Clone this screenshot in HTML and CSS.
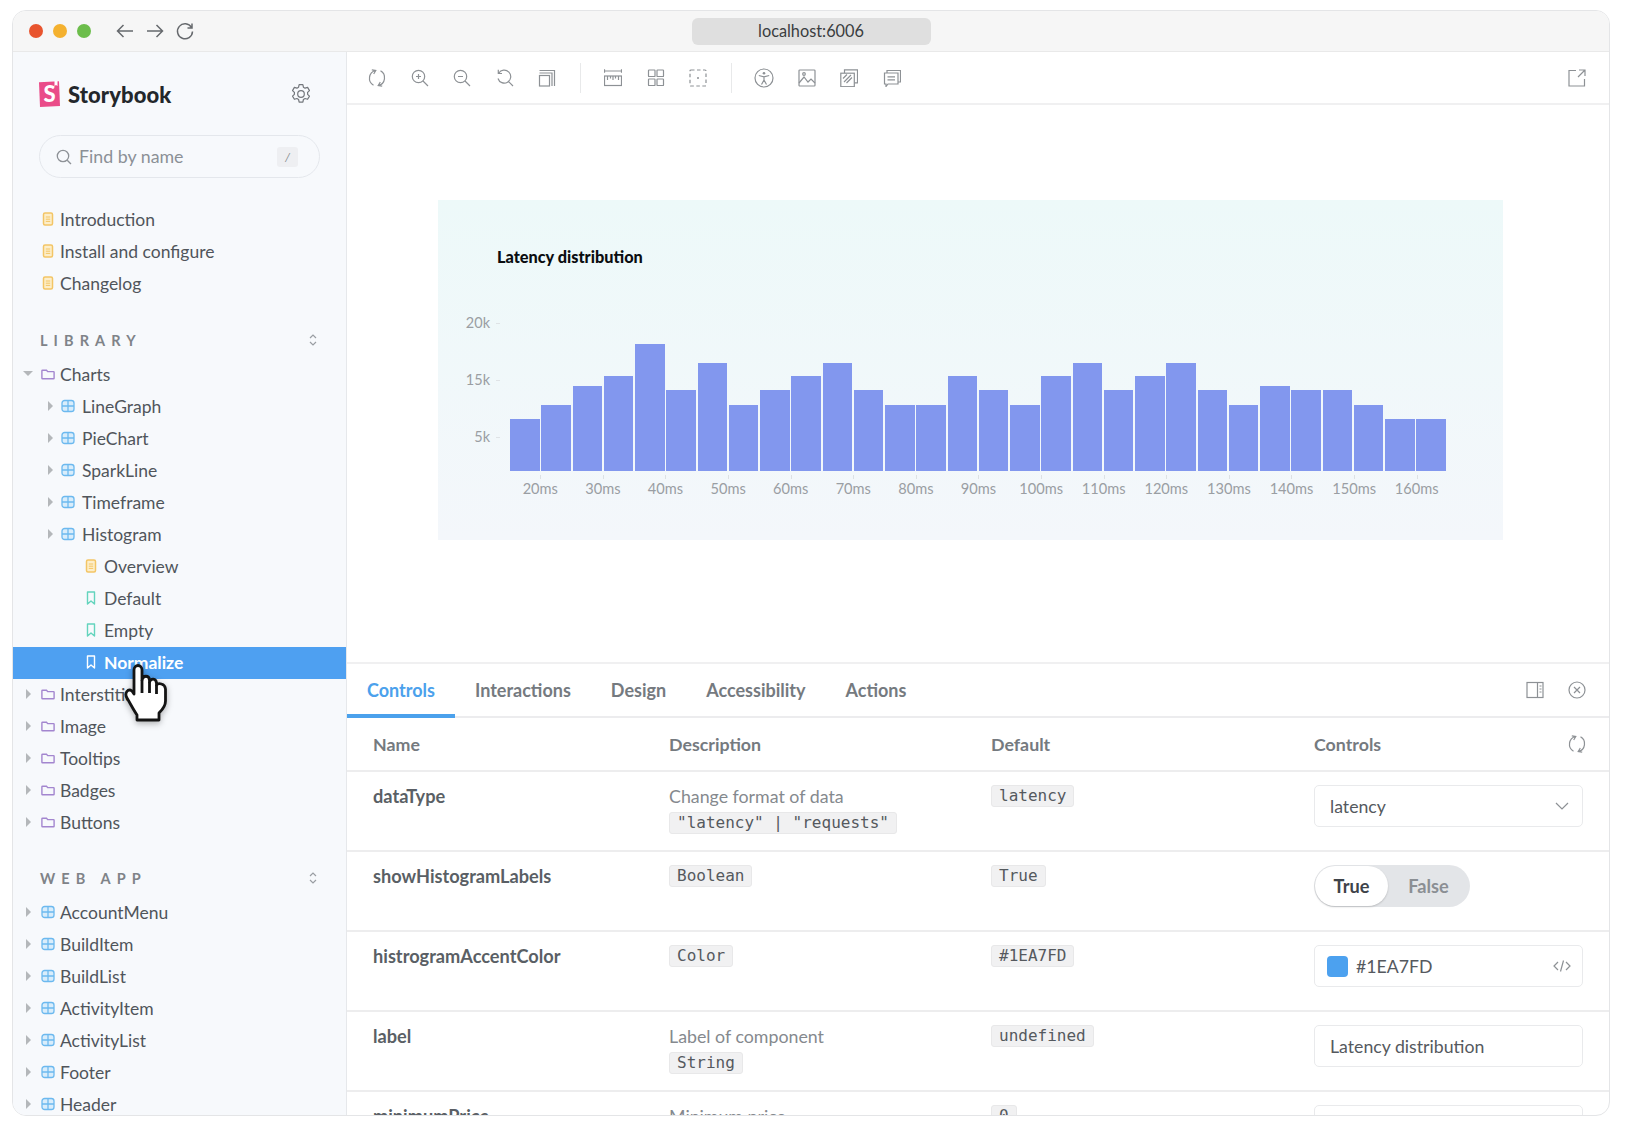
FILE: index.html
```html
<!DOCTYPE html>
<html lang="en">
<head>
<meta charset="utf-8">
<title>Storybook</title>
<link rel="stylesheet" href="styles.css">
</head>
<body>
<svg class="defs" width="0" height="0">
  <defs>
    <symbol id="doc" viewBox="0 0 12 14"><rect x="1.500" y="1" width="9" height="12" rx="1.500" fill="#fdeec9" stroke="#f3c565" stroke-width="1.500"/><path d="M3.800 5h4.400M3.800 7.200h4.400M3.800 9.400h4.400" stroke="#f3c565" stroke-width="1"/></symbol>
    <symbol id="folder" viewBox="0 0 14 14"><path d="M1.500 3.200h4l1.200 1.400h5.800a.6.600 0 0 1 .6.600v6a.6.600 0 0 1-.6.600h-11a.6.600 0 0 1-.6-.6V3.800a.6.600 0 0 1 .6-.6z" fill="none" stroke="#a386cf" stroke-width="1.400"/></symbol>
    <symbol id="comp" viewBox="0 0 14 14"><rect x="1" y="1.500" width="12" height="11" rx="2.600" fill="#d9edfb" stroke="#6cb9ef" stroke-width="1.300"/><path d="M7 1.500v11M1 7h12" stroke="#6cb9ef" stroke-width="1.300"/></symbol>
    <symbol id="mark" viewBox="0 0 12 14"><path d="M2.500 1h7v12L6 10l-3.500 3z" fill="none" stroke="#63d4bd" stroke-width="1.400" stroke-linejoin="round"/></symbol>
    <symbol id="markw" viewBox="0 0 12 14"><path d="M2.500 1h7v12L6 10l-3.500 3z" fill="none" stroke="#fff" stroke-width="1.400" stroke-linejoin="round"/></symbol>
    <symbol id="updown" viewBox="0 0 10 14"><path d="M2 5l3-3 3 3M2 9l3 3 3-3" fill="none" stroke="#9a9ea3" stroke-width="1.200"/></symbol>
    <symbol id="sync" viewBox="0 0 18 18"><path d="M5.500 16.200A8 8 0 0 1 7.500 1.500M3.800 .8 7.800 1.500 5.700 5M12.500 1.800A8 8 0 0 1 10.500 16.500M14.200 17.200 10.200 16.500 12.300 13"/></symbol>
  </defs>
</svg>

<div class="window">
  <header class="titlebar">
    <div class="chrome-left">
      <span class="light red"></span><span class="light amber"></span><span class="light green"></span>
      <div class="nav">
        <svg class="ico20" viewBox="0 0 20 20"><path d="M18 10H2.500M8.500 4l-6 6 6 6"/></svg>
        <svg class="ico20" viewBox="0 0 20 20"><path d="M2 10h15.500M11.500 4l6 6-6 6"/></svg>
        <svg class="ico20" viewBox="0 0 20 20"><path d="M16.500 6.500A7.500 7.500 0 1 0 17.500 10.500M17 2.500v4.500h-4.500"/></svg>
      </div>
    </div>
    <div class="url">localhost:6006</div>
    <div></div>
  </header>

  <div class="main">
    <aside class="sidebar">
      <div class="brand">
        <svg class="logo" viewBox="0 0 22 26"><path d="M0 1.200 20 .3 21 25 1 26z" fill="#ea4c89"/><path d="M15.500 0l3 .1v5l-1.500-1.200-1.500 1.100z" fill="#fff"/><text x="10.500" y="21" class="logo-s">S</text></svg>
        <span class="brand-name">Storybook</span>
        <svg class="gear" viewBox="0 0 20 20"><path d="M8.300 1.500h3.400l.5 2.300 1.500.9 2.300-.7 1.700 2.900-1.700 1.600v1.800l1.700 1.600-1.700 2.900-2.300-.7-1.500.9-.5 2.300H8.300l-.5-2.300-1.500-.9-2.300.7-1.700-2.900 1.700-1.600V8.500L2.300 6.900 4 4l2.300.7 1.500-.9z"/><circle cx="10" cy="10" r="3"/></svg>
      </div>
      <div class="search">
        <svg class="search-ico" viewBox="0 0 16 16"><circle cx="7" cy="7" r="5.700"/><path d="M11.200 11.200 15 15"/></svg>
        <span class="search-text">Find by name</span>
        <kbd class="slash">/</kbd>
      </div>

      <div class="group first">
        <div class="row d0"><span class="caret none"></span><svg class="ti"><use href="#doc"/></svg><span>Introduction</span></div>
        <div class="row d0"><span class="caret none"></span><svg class="ti"><use href="#doc"/></svg><span>Install and configure</span></div>
        <div class="row d0"><span class="caret none"></span><svg class="ti"><use href="#doc"/></svg><span>Changelog</span></div>
      </div>

      <div class="section"><span class="section-name">LIBRARY</span><svg class="updown"><use href="#updown"/></svg></div>
      <div class="group">
        <div class="row d0"><span class="caret open"></span><svg class="ti"><use href="#folder"/></svg><span>Charts</span></div>
        <div class="row d1"><span class="caret"></span><svg class="ti"><use href="#comp"/></svg><span>LineGraph</span></div>
        <div class="row d1"><span class="caret"></span><svg class="ti"><use href="#comp"/></svg><span>PieChart</span></div>
        <div class="row d1"><span class="caret"></span><svg class="ti"><use href="#comp"/></svg><span>SparkLine</span></div>
        <div class="row d1"><span class="caret"></span><svg class="ti"><use href="#comp"/></svg><span>Timeframe</span></div>
        <div class="row d1"><span class="caret"></span><svg class="ti"><use href="#comp"/></svg><span>Histogram</span></div>
        <div class="row d2"><svg class="ti"><use href="#doc"/></svg><span>Overview</span></div>
        <div class="row d2"><svg class="ti"><use href="#mark"/></svg><span>Default</span></div>
        <div class="row d2"><svg class="ti"><use href="#mark"/></svg><span>Empty</span></div>
        <div class="row d2 selected"><svg class="ti"><use href="#markw"/></svg><span>Normalize</span></div>
        <div class="row d0"><span class="caret"></span><svg class="ti"><use href="#folder"/></svg><span>Interstitial</span></div>
        <div class="row d0"><span class="caret"></span><svg class="ti"><use href="#folder"/></svg><span>Image</span></div>
        <div class="row d0"><span class="caret"></span><svg class="ti"><use href="#folder"/></svg><span>Tooltips</span></div>
        <div class="row d0"><span class="caret"></span><svg class="ti"><use href="#folder"/></svg><span>Badges</span></div>
        <div class="row d0"><span class="caret"></span><svg class="ti"><use href="#folder"/></svg><span>Buttons</span></div>
      </div>

      <div class="section web"><span class="section-name">WEB APP</span><svg class="updown"><use href="#updown"/></svg></div>
      <div class="group">
        <div class="row d0"><span class="caret"></span><svg class="ti"><use href="#comp"/></svg><span>AccountMenu</span></div>
        <div class="row d0"><span class="caret"></span><svg class="ti"><use href="#comp"/></svg><span>BuildItem</span></div>
        <div class="row d0"><span class="caret"></span><svg class="ti"><use href="#comp"/></svg><span>BuildList</span></div>
        <div class="row d0"><span class="caret"></span><svg class="ti"><use href="#comp"/></svg><span>ActivityItem</span></div>
        <div class="row d0"><span class="caret"></span><svg class="ti"><use href="#comp"/></svg><span>ActivityList</span></div>
        <div class="row d0"><span class="caret"></span><svg class="ti"><use href="#comp"/></svg><span>Footer</span></div>
        <div class="row d0"><span class="caret"></span><svg class="ti"><use href="#comp"/></svg><span>Header</span></div>
      </div>
    </aside>

    <main class="content">
      <div class="toolbar">
        <svg class="tool"><use href="#sync"/></svg>
        <svg class="tool" viewBox="0 0 18 18"><circle cx="7.500" cy="7.500" r="6.200"/><path d="M12 12l5 5M7.500 5v5M5 7.500h5"/></svg>
        <svg class="tool" viewBox="0 0 18 18"><circle cx="7.500" cy="7.500" r="6.200"/><path d="M12 12l5 5M5 7.500h5"/></svg>
        <svg class="tool" viewBox="0 0 18 18"><path d="M2.700 4.200A6.500 6.500 0 1 1 2 9.500M2.300 .8v3.700H6M12.300 12.300l4.700 4.700"/></svg>
        <svg class="tool" viewBox="0 0 18 18"><rect x="1.500" y="6.500" width="10" height="10.500"/><path d="M1.500 4h12.500v13M1.500 1.500h15V17"/></svg>
        <span class="tool-sep"></span>
        <svg class="tool" viewBox="0 0 18 18"><path d="M.5 2h17M.5 .3v3.400M17.500 .3v3.400"/><rect x=".5" y="7" width="17" height="9.500"/><path d="M3.500 7v4M6.500 7v2.500M9 7v4M11.500 7v2.500M14.500 7v4"/></svg>
        <svg class="tool" viewBox="0 0 18 18"><rect x="1.500" y="1" width="6.500" height="6.500" rx=".6"/><rect x="10" y="1" width="6.500" height="6.500" rx=".6"/><rect x="1.500" y="10" width="6.500" height="6.500" rx=".6"/><rect x="10" y="10" width="6.500" height="6.500" rx=".6"/></svg>
        <svg class="tool" viewBox="0 0 18 18"><rect x="1" y="1" width="16" height="16" rx="1" stroke-dasharray="3.500 2.500"/><circle class="dot" cx="9" cy="9" r="1"/></svg>
        <span class="tool-sep"></span>
        <svg class="tool tool-big" viewBox="0 0 20 20"><circle cx="10" cy="10" r="9"/><circle class="dot" cx="10" cy="5.200" r="1.300"/><path d="M4.800 7.500 10 8.800l5.200-1.300M10 8.800v3.200M10 12l-2.500 4.500M10 12l2.500 4.500"/></svg>
        <svg class="tool" viewBox="0 0 18 18"><rect x="1" y="1" width="16" height="16" rx=".8"/><path d="M1 14l5-6 4 5 3-3 4 4"/><circle cx="6" cy="5" r="1.300"/></svg>
        <svg class="tool" viewBox="0 0 18 18"><path d="M4.500 4V.8h13v13h-3.200"/><rect x=".8" y="4.200" width="13.500" height="13.500"/><path d="M4 13l7-7M6.500 14l5.500-5.500M3 9.500 7 5.500"/></svg>
        <svg class="tool" viewBox="0 0 18 18"><path d="M4 4V1.500h13.500V13H15"/><path d="M1.500 4h13.500v11H5l-2 2.500V15H1.500z"/><path d="M4.500 7.800h7.500M4.500 10.800h7.500"/></svg>
        <span class="spacer"></span>
        <svg class="tool" viewBox="0 0 18 18"><path d="M8 1.500H1v15.500h15.500V10M11 1h6v6M17 1l-7 7"/></svg>
      </div>

      <section class="preview">
        <div class="card">
          <h2 class="chart-title">Latency distribution</h2>
          <div class="chart">
            <div class="yaxis"><span>20k</span><span>15k</span><span>5k</span></div>
            <div class="bars">
              <i style="height:52px"></i><i style="height:66px"></i><i style="height:85px"></i><i style="height:95px"></i><i style="height:127px"></i>
              <i style="height:81px"></i><i style="height:108px"></i><i style="height:66px"></i><i style="height:81px"></i><i style="height:95px"></i>
              <i style="height:108px"></i><i style="height:81px"></i><i style="height:66px"></i><i style="height:66px"></i><i style="height:95px"></i>
              <i style="height:81px"></i><i style="height:66px"></i><i style="height:95px"></i><i style="height:108px"></i><i style="height:81px"></i>
              <i style="height:95px"></i><i style="height:108px"></i><i style="height:81px"></i><i style="height:66px"></i><i style="height:85px"></i>
              <i style="height:81px"></i><i style="height:81px"></i><i style="height:66px"></i><i style="height:52px"></i><i style="height:52px"></i>
            </div>
          </div>
          <div class="xaxis">
            <span>20ms</span><span>30ms</span><span>40ms</span><span>50ms</span><span>60ms</span><span>70ms</span><span>80ms</span><span>90ms</span><span>100ms</span><span>110ms</span><span>120ms</span><span>130ms</span><span>140ms</span><span>150ms</span><span>160ms</span>
          </div>
        </div>
      </section>

      <section class="panel">
        <div class="tabs">
          <span class="tab active">Controls</span>
          <span class="tab">Interactions</span>
          <span class="tab">Design</span>
          <span class="tab">Accessibility</span>
          <span class="tab">Actions</span>
          <span class="spacer"></span>
          <svg class="tool tab-ico" viewBox="0 0 18 18"><rect x="1" y="1.500" width="16" height="15"/><path d="M11.500 1.500v15M13.500 5h2M13.500 8h2M13.500 11h2"/></svg>
          <svg class="tool tab-ico" viewBox="0 0 18 18"><circle cx="9" cy="9" r="8"/><path d="M6 6l6 6M12 6l-6 6"/></svg>
        </div>
        <div class="table">
          <div class="tr head">
            <div>Name</div><div>Description</div><div>Default</div>
            <div class="ctl-head">Controls<svg class="tool"><use href="#sync"/></svg></div>
          </div>
          <div class="tr">
            <div class="name">dataType</div>
            <div class="desc"><p>Change format of data</p><code>"latency" | "requests"</code></div>
            <div><code>latency</code></div>
            <div class="field"><span>latency</span><svg class="chev" viewBox="0 0 14 8"><path d="M1 1l6 6 6-6"/></svg></div>
          </div>
          <div class="tr">
            <div class="name">showHistogramLabels</div>
            <div><code>Boolean</code></div>
            <div><code>True</code></div>
            <div class="toggle"><span class="on">True</span><span class="off">False</span></div>
          </div>
          <div class="tr">
            <div class="name">histrogramAccentColor</div>
            <div><code>Color</code></div>
            <div><code>#1EA7FD</code></div>
            <div class="field color"><span class="swatch"></span><span>#1EA7FD</span><svg class="chev code-ico" viewBox="0 0 18 14"><path d="M5 3 1 7l4 4M13 3l4 4-4 4M10.500 1.500l-3 11"/></svg></div>
          </div>
          <div class="tr">
            <div class="name">label</div>
            <div class="desc"><p>Label of component</p><code>String</code></div>
            <div><code>undefined</code></div>
            <div class="field"><span>Latency distribution</span></div>
          </div>
          <div class="tr">
            <div class="name">minimumPrice</div>
            <div class="desc"><p>Minimum price</p></div>
            <div><code>0</code></div>
            <div class="field"></div>
          </div>
        </div>
      </section>
    </main>
  </div>

  <svg class="hand" viewBox="0 0 44 60"><path d="M9 7C9 1 17 1 17 7V17C18 12 24 12 24.500 17V19C26 15 31 15 31.500 20V22C33 20 40 20 40.500 26V38C40.500 44 36 48 34 50V57H12V52C8 46 5 40 2 35C-1 30 3 25 7 28L9 31Z"/><path d="M17 17V30M24.500 19V30M31.500 22V31"/></svg>
</div>
</body>
</html>
```

FILE: styles.css
```css
* { box-sizing: border-box; }
html, body { margin: 0; padding: 0; background: #fff; }
body { font-family: "Lato", "Noto Sans", sans-serif; color: #444a50; height: 1130px; overflow: hidden; }
.defs { position: absolute; }

.window {
  position: relative;
  width: 1598px;
  height: 1106px;
  margin: 10px 0 0 12px;
  border: 1px solid #e4e5e7;
  border-radius: 14px;
  overflow: hidden;
  display: flex;
  flex-direction: column;
  background: #fff;
}

.titlebar {
  height: 41px;
  flex: none;
  display: grid;
  grid-template-columns: 1fr 239px 1fr;
  align-items: center;
  background: #f6f6f6;
  border-bottom: 1px solid #e9e9e9;
}
.chrome-left { display: flex; align-items: center; padding-left: 16px; gap: 10px; }
.light { width: 14px; height: 14px; border-radius: 50%; }
.red { background: #e8542e; }
.amber { background: #f4b12f; }
.green { background: #6cbd4b; }
.nav { display: flex; gap: 10px; margin-left: 14px; }
.ico20 { width: 20px; height: 20px; fill: none; stroke: #66696d; stroke-width: 1.500; }
.url {
  height: 27px;
  border-radius: 6px;
  background: #dfdfdf;
  font-size: 16.300px;
  line-height: 25px;
  text-align: center;
  color: #3a3d40;
}

.main { flex: 1; display: flex; min-height: 0; }

.sidebar {
  width: 334px;
  flex: none;
  background: #f7f9fc;
  border-right: 1px solid #e6e8eb;
  overflow: hidden;
  padding-top: 24px;
}
.brand { height: 36px; display: flex; align-items: center; padding-left: 26px; }
.logo { width: 22px; height: 26px; }
.logo-s { font-family: "Lato", sans-serif; font-weight: 900; font-size: 22px; fill: #fff; text-anchor: middle; }
.brand-name { margin-left: 7px; font-size: 22px; font-weight: 900; color: #23272b; letter-spacing: .1px; }
.gear { width: 22px; height: 22px; margin-left: auto; margin-right: 34px; fill: none; stroke: #74787d; stroke-width: 1.100; stroke-linejoin: round; }

.search {
  height: 43px;
  margin: 23px 26px 0 26px;
  border: 1px solid #e4e7ec;
  border-radius: 22px;
  display: flex;
  align-items: center;
  padding-left: 16px;
  padding-right: 21px;
  color: #8b9096;
  font-size: 17.800px;
}
.search-ico { width: 16px; height: 16px; fill: none; stroke: #8e9297; stroke-width: 1.300; }
.search-text { margin-left: 7px; margin-bottom: 2px; }
.slash {
  margin-left: auto;
  width: 21px;
  height: 20px;
  background: #eeeff2;
  border-radius: 3px;
  font: italic 12px/20px "Lato", sans-serif;
  text-align: center;
  color: #85898e;
}

.group { display: flex; flex-direction: column; }
.group.first { margin-top: 26px; }
.row { height: 32px; padding-bottom: 2px; display: flex; align-items: center; font-size: 17.500px; color: #50555b; white-space: nowrap; }
.row.d0 { padding-left: 12px; }
.row.d1 { padding-left: 34px; }
.row.d2 { padding-left: 69.500px; }
.caret { width: 7px; height: 10px; flex: none; margin-right: 8px; position: relative; }
.caret::before {
  content: "";
  position: absolute;
  left: 1px; top: 0;
  border-left: 5px solid #b4b7ba;
  border-top: 5px solid transparent;
  border-bottom: 5px solid transparent;
}
.caret.open::before {
  left: -2px; top: 2px;
  border-top: 5px solid #b4b7ba;
  border-left: 5px solid transparent;
  border-right: 5px solid transparent;
  border-bottom: 0;
}
.caret.none::before { display: none; }
.row.d1 .caret { margin-right: 6px; }
.ti { width: 14px; height: 14px; flex: none; margin-right: 5px; margin-left: 1px; }
.row.d1 .ti { margin-right: 7px; }
.row.d2 .ti { margin-right: 6.500px; }
.row.selected { background: #4ea0f1; color: #fff; font-weight: 700; }

.section { height: 34px; margin: 23px 0 2px; padding: 0 28px 0 27px; display: flex; align-items: center; justify-content: space-between; }
.section.web { margin-top: 22px; }
.section-name { font-size: 14.500px; font-weight: 700; letter-spacing: .42em; color: #7f8388; white-space: pre; }
.updown { width: 10px; height: 14px; }

.content { flex: 1; min-width: 0; display: flex; flex-direction: column; }
.toolbar {
  height: 53px;
  flex: none;
  display: flex;
  align-items: center;
  padding: 0 23px 0 21px;
  gap: 24.500px;
  border-bottom: 2px solid #f0f0f1;
}
.tool { width: 18px; height: 18px; flex: none; fill: none; stroke: #8d9195; stroke-width: 1.200; }
.tool-big { width: 20px; height: 20px; margin: 0 -1px; }
.dot { fill: #8d9195; stroke: none; }
.tool-sep { width: 1px; height: 30px; background: #e8e9ea; margin: 0 -1px; flex: none; }
.spacer { flex: 1; }

.preview { height: 559px; flex: none; padding: 95px 0 0 91px; border-bottom: 2px solid #f0f0f1; }
.card { width: 1065px; height: 340px; background: linear-gradient(180deg, #edf9f9, #f4f7fb); padding-top: 47px; }
.chart-title { margin: 0 0 46px 59px; font-size: 16.300px; line-height: 20px; font-weight: 900; color: #0b0d10; }
.chart { display: flex; height: 158px; }
.yaxis { width: 72px; padding-right: 11px; display: flex; flex-direction: column; gap: 37px; align-items: flex-end; font-size: 14.500px; line-height: 20px; color: #9a9ea3; }
.yaxis span { position: relative; margin-right: 9px; }
.yaxis span::after { content: ""; position: absolute; right: -10px; top: 10px; width: 4px; height: 1px; background: #dfe3e6; }
.bars { width: 936px; display: flex; gap: 1.700px; align-items: flex-end; }
.bars i { flex: 1; background: #8297ee; }
.xaxis { margin-left: 71px; width: 939px; display: grid; grid-template-columns: repeat(15, 1fr); text-align: center; font-size: 14.600px; line-height: 18px; color: #9a9ea3; padding-top: 9px; }
.xaxis span { position: relative; }
.xaxis span::before { content: ""; position: absolute; left: 50%; top: -5px; width: 1px; height: 4px; background: #dde1e4; }

.panel { flex: 1; min-height: 0; overflow: hidden; display: flex; flex-direction: column; }
.tabs { height: 54px; flex: none; display: flex; align-items: center; border-bottom: 2px solid #ececee; padding-right: 23px; }
.tab { height: 54px; line-height: 55px; padding: 0 20px; font-size: 18px; font-weight: 700; color: #757a7f; position: relative; }
.tab.active { color: #4ba1ec; }
.tab.active::after { content: ""; position: absolute; left: 0; right: 0; bottom: -1px; height: 4px; background: #4ba1ec; }
.tab-ico { margin-left: 24px; }

.tr { display: grid; grid-template-columns: 296px 322px 323px 1fr; padding: 13px 26px 0 26px; height: 80px; border-bottom: 2px solid #ededee; font-size: 17.800px; }
.tr.head { height: 54px; align-items: center; padding-top: 0; font-size: 17.800px; font-weight: 700; color: #757a7f; }
.ctl-head { display: flex; align-items: center; justify-content: space-between; }
.ctl-head .tool { margin-right: -3px; }
.name { font-size: 18.200px; font-weight: 700; color: #5a5f65; line-height: 22px; }
.desc p { margin: 0 0 5px; line-height: 22px; color: #85898e; }
code {
  display: block;
  width: fit-content;
  height: 22px;
  padding: 0 7px;
  border: 1px solid #e8e8e9;
  border-radius: 3px;
  background: #f1f1f2;
  font: 16px/20px "DejaVu Sans Mono", monospace;
  color: #55595e;
}
.field {
  height: 42px;
  border: 1px solid #e9eaec;
  border-radius: 5px;
  background: #fff;
  display: flex;
  align-items: center;
  padding: 0 13px 0 15px;
  font-size: 17.700px;
  color: #55595e;
  justify-content: space-between;
}
.chev { width: 14px; height: 8px; fill: none; stroke: #8d9195; stroke-width: 1.200; }
.code-ico { width: 18px; height: 14px; margin-right: -2px; }
.field.color { padding-left: 12px; justify-content: flex-start; }
.swatch { width: 21px; height: 21px; border-radius: 4px; background: #4ca1ef; margin-right: 8px; }
.field.color .chev { margin-left: auto; }
.toggle { width: 156px; height: 42px; border-radius: 21px; background: #e3e5e8; display: flex; align-items: center; padding: 1px; font-size: 18.200px; font-weight: 700; }
.on { width: 73px; height: 40px; line-height: 40px; text-align: center; border-radius: 20px; background: #fff; color: #3e4349; box-shadow: 0 1px 2px rgba(0,0,0,.18); }
.off { flex: 1; text-align: center; color: #8b8f94; }

.hand { position: absolute; left: 112px; top: 652px; width: 44px; height: 60px; overflow: visible; fill: #fff; stroke: #141414; stroke-width: 2.800; stroke-linejoin: round; filter: drop-shadow(0 2px 3px rgba(0,0,0,.3)); }
```
